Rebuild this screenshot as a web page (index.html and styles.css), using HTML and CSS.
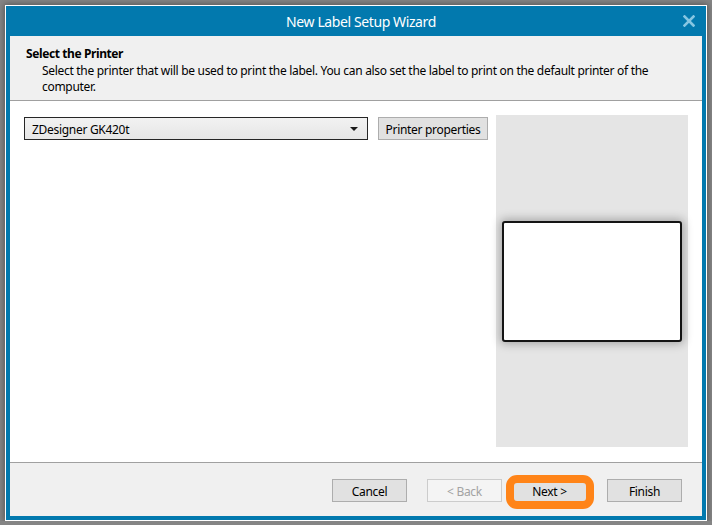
FILE: index.html
```html
<!DOCTYPE html>
<html lang="en">
<head>
  <meta charset="UTF-8" />
  <title>New Label Setup Wizard</title>
  <link rel="stylesheet" href="styles.css">
</head>
<body>

  <div class="window">
    <div class="titlebar">
      <span class="title">New Label Setup Wizard</span>
      <span class="close">
        <svg width="12" height="12" viewBox="0 0 12 12">
          <path d="M1.5 1.5 L10.5 10.5 M10.5 1.5 L1.5 10.5" stroke="#86c6e2" stroke-width="2.6" stroke-linecap="square" />
        </svg>
      </span>
    </div>

    <div class="content">
      <div class="header">
        <h1>Select the Printer</h1>
        <p>Select the printer that will be used to print the label. You can also set the label to print on the default printer of the<br>computer.</p>
      </div>

      <div class="main">
        <div class="printer-col">
          <div class="printer-row">
            <div class="select">
              <span>ZDesigner GK420t</span>
              <span class="arrow"></span>
            </div>
            <button class="btn">Printer properties</button>
          </div>
        </div>
        <div class="preview">
          <div class="label"></div>
        </div>
      </div>

      <div class="footer">
        <button class="btn cancel">Cancel</button>
        <button class="btn back" disabled>&lt; Back</button>
        <button class="btn next">Next &gt;<span class="ring"></span></button>
        <button class="btn">Finish</button>
      </div>
    </div>
  </div>

</body>
</html>
```

FILE: styles.css
```css
body {
  margin: 0;
  padding: 0;
  background-color: #858585;
  font-family: 'Noto Sans', 'DejaVu Sans', sans-serif;
  font-size: 12px;
  letter-spacing: -0.3px;
  color: #000;
}

.window {
  box-sizing: border-box;
  width: 702px;
  height: 516px;
  margin: 5px 0 0 5px;
  border: 1px solid #fff;
  background: #0279ae;
  padding: 0 4px 4px 4px;
  box-shadow: 0 0 6px 1px rgba(0, 0, 0, 0.35);
  display: flex;
  flex-direction: column;
}

.titlebar {
  height: 30px;
  display: flex;
  align-items: center;
  margin: 0 -4px;
}

.title {
  flex: 1;
  text-align: center;
  padding-left: 33px;
  color: #fff;
  font-size: 14px;
  letter-spacing: -0.4px;
}

.close {
  width: 12px;
  height: 12px;
  margin-right: 11px;
  display: flex;
}

.content {
  flex: 1;
  display: flex;
  flex-direction: column;
  background: #fff;
}

.header {
  height: 65px;
  background: #f0f0f0;
  border-bottom: 1px solid #a0a0a0;
  padding: 10px 0 0 16px;
  box-sizing: border-box;
}

.header h1 {
  margin: 0;
  font-size: 12px;
  font-weight: bold;
  line-height: 16px;
  letter-spacing: -0.4px;
}

.header p {
  margin: 1px 0 0 16px;
  line-height: 16px;
  white-space: nowrap;
}

.main {
  flex: 1;
  display: flex;
  padding: 14px 14px 15px 14px;
  border-bottom: 1px solid #a0a0a0;
}

.printer-col {
  flex: 1;
  padding-top: 2px;
}

.printer-row {
  display: flex;
  gap: 10px;
}

.select {
  box-sizing: border-box;
  width: 344px;
  height: 23px;
  border: 1px solid #262626;
  background: linear-gradient(#f2f2f2, #e6e6e6);
  display: flex;
  align-items: center;
  justify-content: space-between;
  padding: 1px 9px 0 7px;
}

.arrow {
  width: 0;
  height: 0;
  border-left: 4px solid transparent;
  border-right: 4px solid transparent;
  border-top: 4px solid #1a1a1a;
}

.btn {
  box-sizing: border-box;
  height: 23px;
  padding: 1px 10px 0;
  border: 1px solid #adadad;
  background: #e1e1e1;
  font-family: inherit;
  font-size: 12px;
  letter-spacing: inherit;
  color: #000;
}

.printer-row .btn {
  width: 110px;
  padding: 1px 0 0;
}

.preview {
  width: 192px;
  margin-left: 8px;
  background: #e5e5e5;
  display: flex;
  align-items: center;
  justify-content: center;
}

.label {
  box-sizing: border-box;
  width: 180px;
  height: 121px;
  background: #fff;
  border: 2px solid #141414;
  border-radius: 3px;
  box-shadow: 0 0 10px 2px rgba(0, 0, 0, 0.28);
}

.footer {
  height: 53px;
  background: #f0f0f0;
  display: flex;
  justify-content: flex-end;
  align-items: flex-start;
  padding: 16px 20px 0 0;
  box-sizing: border-box;
  gap: 20px;
}

.footer .btn {
  width: 75px;
  padding: 1px 0 0;
}

.footer .back {
  margin-right: -10px;
  background: #f4f4f4;
  border-color: #cccccc;
  color: #a3a3a3;
}

.next {
  position: relative;
}

.ring {
  position: absolute;
  left: -7px;
  top: -5px;
  width: 88px;
  height: 34px;
  box-sizing: border-box;
  border: 8px solid #ff8418;
  border-radius: 11px;
}
```
